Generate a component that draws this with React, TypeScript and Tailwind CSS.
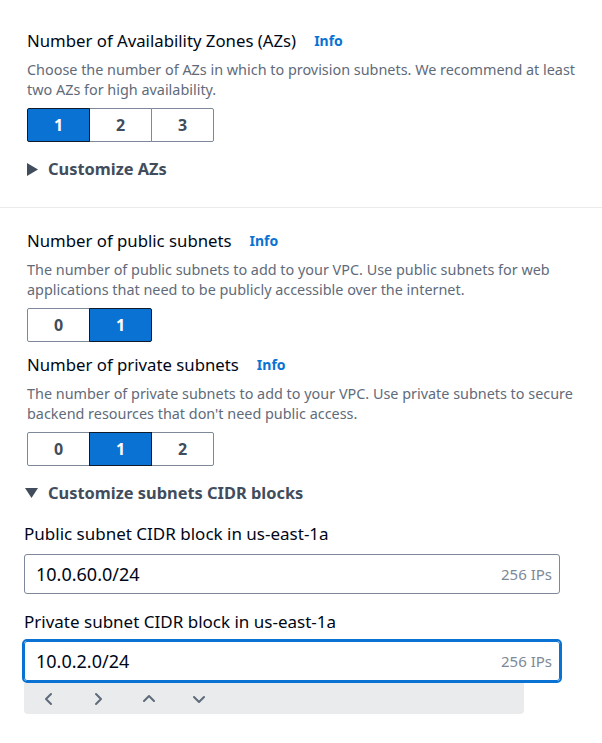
import React from "react";

function Info() {
  return <span className="ml-[18px] text-[14px] font-bold text-[#0972d3]">Info</span>;
}

function Seg({ options, selected }: { options: string[]; selected: number }) {
  return (
    <div className="flex">
      {options.map((o, i) => {
        const sel = i === selected;
        const first = i === 0;
        const last = i === options.length - 1;
        return (
          <div
            key={o}
            className={
              "flex h-[34px] w-[63px] items-center justify-center text-[16px] font-bold " +
              (sel
                ? "relative z-10 border border-[#0f1b2a] bg-[#0972d3] text-white "
                : "border border-[#7d8998] bg-white text-[#414d5c] ") +
              (first ? "rounded-l-[2px] " : "-ml-px ") +
              (last ? "rounded-r-[2px]" : "")
            }
          >
            {o}
          </div>
        );
      })}
    </div>
  );
}

function Heading({ children }: { children: React.ReactNode }) {
  return (
    <div className="flex items-center text-[16.75px] leading-[22px] text-[#000716]">
      {children}
    </div>
  );
}

function Desc({ children }: { children: React.ReactNode }) {
  return <p className="mt-2 text-[14.4px] leading-[20px] text-[#5f6b7a]">{children}</p>;
}

export default function App() {
  return (
    <div
      className="w-[602px] h-[743px] bg-white overflow-hidden"
      style={{ fontFamily: '"Noto Sans", "Open Sans", sans-serif' }}
    >
      <div className="px-[27px] pt-[30px]">
        <Heading>
          Number of Availability Zones (AZs)
          <Info />
        </Heading>
        <Desc>
          Choose the number of AZs in which to provision subnets. We recommend at least two AZs for
          high availability.
        </Desc>
        <div className="mt-2">
          <Seg options={["1", "2", "3"]} selected={0} />
        </div>
        <div className="mt-4 flex items-center text-[16.4px] leading-[22px] font-bold text-[#414d5c]">
          <svg width="12" height="13" viewBox="0 0 12 13" className="mr-[9px]">
            <path d="M0 0 L11 6.5 L0 13 Z" fill="#414d5c" />
          </svg>
          Customize AZs
        </div>
      </div>
      <div className="mt-[27px] h-px bg-[#e9ebed]" />
      <div className="px-[27px] pt-[22px]">
        <Heading>
          Number of public subnets
          <Info />
        </Heading>
        <Desc>
          The number of public subnets to add to your VPC. Use public subnets for web applications
          that need to be publicly accessible over the internet.
        </Desc>
        <div className="mt-2">
          <Seg options={["0", "1"]} selected={1} />
        </div>
        <div className="mt-3">
          <Heading>
            Number of private subnets
            <Info />
          </Heading>
        </div>
        <Desc>
          The number of private subnets to add to your VPC. Use private subnets to secure backend
          resources that don't need public access.
        </Desc>
        <div className="mt-2">
          <Seg options={["0", "1", "2"]} selected={1} />
        </div>
        <div className="mt-4 -ml-[2px] flex items-center text-[16.4px] leading-[22px] font-bold text-[#414d5c]">
          <svg width="13" height="12" viewBox="0 0 13 12" className="mr-[10px]">
            <path d="M0 1 L13 1 L6.5 11 Z" fill="#414d5c" />
          </svg>
          Customize subnets CIDR blocks
        </div>
      </div>
      <div className="pl-[24px] pr-[42px] pt-[19px]">
        <div className="text-[17px] leading-[22px] text-[#000716]">
          Public subnet CIDR block in us-east-1a
        </div>
        <div className="mt-[9px] flex h-[40px] items-center justify-between rounded-[3px] border border-[#7d8998] pl-[11px] pr-[7px]">
          <span className="text-[18px] text-[#000716]">10.0.60.0/24</span>
          <span className="text-[15px] text-[#7d8998]">256 IPs</span>
        </div>
        <div className="mt-[17px] text-[17px] leading-[22px] text-[#000716]">
          Private subnet CIDR block in us-east-1a
        </div>
        <div className="mt-[8px] flex h-[40px] items-center justify-between rounded-[3px] border border-[#0972d3] pl-[11px] pr-[7px] outline-2 outline-[#0972d3] outline-offset-0 outline">
          <span className="text-[18px] text-[#000716]">10.0.2.0/24</span>
          <span className="text-[15px] text-[#7d8998]">256 IPs</span>
        </div>
        <div className="mt-[2px] flex h-[31px] w-[500px] items-center rounded-b-[4px] bg-[#e9ebed] pl-[19px] text-[#5f6b7a]">
          {[
            "M8 2 L3 7 L8 12",
            "M3 2 L8 7 L3 12",
            "M1 9 L6 4 L11 9",
            "M1 5 L6 10 L11 5",
          ].map((d, i) => (
            <div key={i} className="flex w-[50px] items-start">
              <svg width="12" height="14" viewBox="0 0 12 14">
                <path d={d} fill="none" stroke="#5f6b7a" strokeWidth="2" strokeLinecap="round" strokeLinejoin="round" />
              </svg>
            </div>
          ))}
        </div>
      </div>
    </div>
  );
}
